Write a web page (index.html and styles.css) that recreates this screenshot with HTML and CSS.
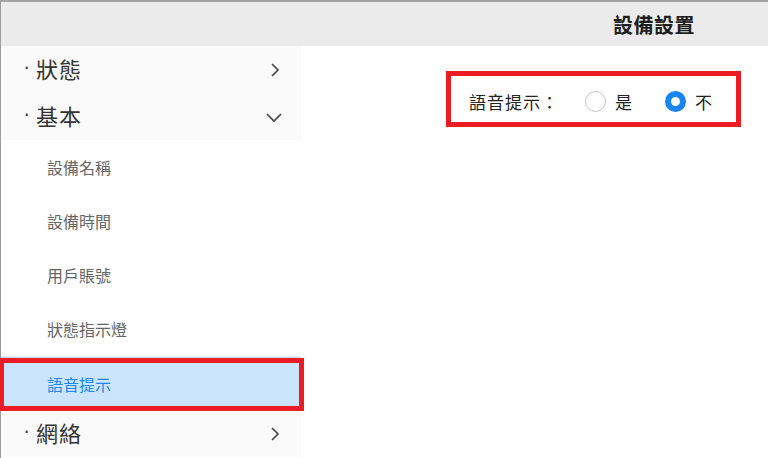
FILE: index.html
```html
<!DOCTYPE html>
<html lang="zh-Hant">
<head>
<meta charset="utf-8">
<title>設備設置</title>
<link rel="stylesheet" href="styles.css">
</head>
<body>
<div class="frame">
  <header class="header">
    <h1 class="title">設備設置</h1>
  </header>
  <div class="main">
    <nav class="sidebar">
      <div class="group">
        <span class="dot">·</span><span class="group-label">狀態</span>
        <svg class="chev" width="12" height="16" viewBox="0 0 12 16"><path d="M3 2 L9 8 L3 14" fill="none" stroke="#444" stroke-width="1.6"/></svg>
      </div>
      <div class="group">
        <span class="dot">·</span><span class="group-label">基本</span>
        <svg class="chev chev-down" width="18" height="12" viewBox="0 0 18 12"><path d="M2 3 L9 10 L16 3" fill="none" stroke="#444" stroke-width="1.6"/></svg>
      </div>
      <div class="item">設備名稱</div>
      <div class="item">設備時間</div>
      <div class="item">用戶賬號</div>
      <div class="item">狀態指示燈</div>
      <div class="item item-active">語音提示</div>
      <div class="group">
        <span class="dot">·</span><span class="group-label">網絡</span>
        <svg class="chev" width="12" height="16" viewBox="0 0 12 16"><path d="M3 2 L9 8 L3 14" fill="none" stroke="#444" stroke-width="1.6"/></svg>
      </div>
      <div class="mark mark-side"></div>
    </nav>
    <section class="content">
      <div class="setting">
        <span class="setting-label">語音提示：</span>
        <span class="radio"></span><span class="radio-text">是</span>
        <span class="radio radio-on"></span><span class="radio-text">不</span>
      </div>
      <div class="mark mark-content"></div>
    </section>
  </div>
</div>
</body>
</html>
```
FILE: styles.css
```css
* { box-sizing: border-box; }
html, body { margin: 0; padding: 0; background: #fff; }
body {
  font-family: "Noto Sans CJK TC", "Noto Sans", sans-serif;
  width: 768px;
  height: 458px;
  overflow: hidden;
}
.frame {
  border-top: 2px solid #a4a4a4;
  border-left: 1px solid #9c9c9c;
  height: 458px;
  position: relative;
}
.header {
  height: 44px;
  background: #ebebeb;
  display: flex;
  justify-content: flex-end;
  align-items: center;
  padding-right: 73px;
}
.title {
  margin: 0;
  font-size: 20px;
  font-weight: 700;
  color: #1e1e1e;
  letter-spacing: 0.5px;
}
.main {
  display: flex;
  height: 412px;
}
.sidebar {
  width: 300px;
  flex: none;
  display: flex;
  flex-direction: column;
  position: relative;
}
.group {
  height: 47px;
  background: #fafafa;
  display: flex;
  align-items: center;
  padding-left: 22px;
  padding-right: 22px;
  color: #333;
  flex: none;
}
.dot {
  font-family: "Liberation Sans", sans-serif;
  font-size: 22px;
  width: 13px;
  flex: none;
  color: #444;
  line-height: 1;
  margin-bottom: 5px;
}
.group-label {
  font-size: 22px;
  flex: 1;
  line-height: 1;
  margin-bottom: 3px;
  letter-spacing: 1px;
}
.chev { flex: none; margin-right: -2px; }
.chev-down { margin-right: -4px; }
.item {
  height: 54px;
  flex: none;
  display: flex;
  align-items: center;
  padding-left: 46px;
  font-size: 16px;
  color: #666;
  background: #fff;
}
.item-active {
  background: #cce4fd;
  color: #1a87f5;
  border-top: 1px solid #dde8f3;
}
.content {
  flex: 1;
  position: relative;
}
.setting {
  display: flex;
  align-items: center;
  margin-top: 43px;
  margin-left: 168px;
  height: 24px;
  font-size: 17px;
  color: #222;
}
.setting-label { margin-right: 26px; letter-spacing: 1px; }
.radio {
  width: 21px;
  height: 21px;
  border-radius: 50%;
  border: 1.5px solid #c4c4c4;
  background: #fff;
  margin-right: 9px;
  flex: none;
}
.radio-on {
  border: 6.5px solid #1a84f5;
  margin-left: 33px;
}
.radio-text { line-height: 1; }
.mark {
  position: absolute;
  border: 5px solid #ec1c24;
  pointer-events: none;
}
.mark-content {
  left: 145px;
  top: 25px;
  width: 295px;
  height: 56px;
}
.mark-side {
  left: -2px;
  top: 312px;
  width: 305px;
  height: 53px;
}
```
